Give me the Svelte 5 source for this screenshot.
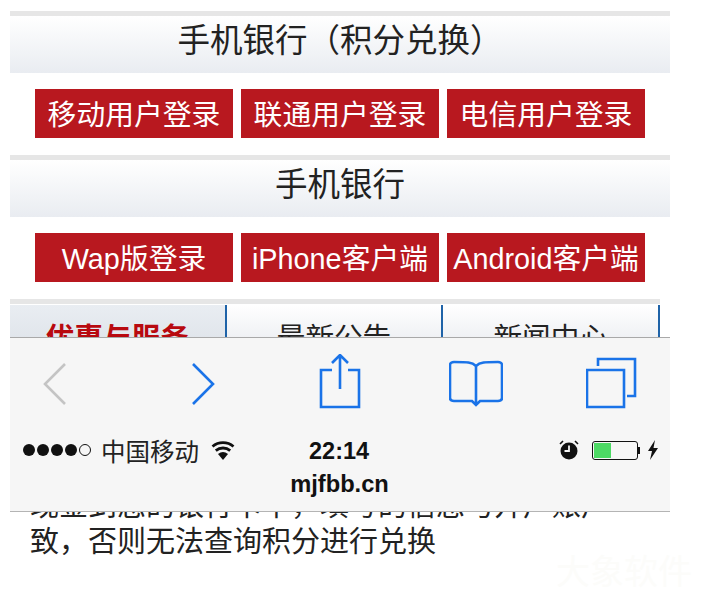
<script>
  const loginA = ['移动用户登录', '联通用户登录', '电信用户登录']
  const loginB = ['Wap版登录', 'iPhone客户端', 'Android客户端']
  const tabs = ['优惠与服务', '最新公告', '新闻中心']
</script>

<div class="page">
  <main>
    <h2 class="bar first">手机银行（积分兑换）</h2>
    <div class="buttons">
      {#each loginA as label}
        <a class="btn">{label}</a>
      {/each}
    </div>

    <h2 class="bar">手机银行</h2>
    <div class="buttons">
      {#each loginB as label}
        <a class="btn">{label}</a>
      {/each}
    </div>

    <div class="tabs">
      {#each tabs as tab, i}
        <div class="tab" class:active={i == 0}>{tab}</div>
      {/each}
    </div>

    <p class="note">现金到您的银行卡中，填写的信息与开户账户一致，否则无法查询积分进行兑换</p>
  </main>

  <div class="mark">大象软件</div>

  <!-- safari toolbar sits over the page -->
  <div class="safari">
    <div class="tools">
      <svg class="back" width="24" height="44" viewBox="0 0 24 44"><path d="M22 2 2 22l20 20" /></svg>
      <svg class="forward" width="24" height="44" viewBox="0 0 24 44"><path d="M2 2l20 20L2 42" /></svg>
      <svg class="share" width="42" height="56" viewBox="0 0 42 56">
        <path d="M13 16H2v37h38V16H29" />
        <path d="M21 2v33M13 9l8-8 8 8" />
      </svg>
      <svg class="book" width="54" height="48" viewBox="0 0 54 48">
        <path d="M27 6C23 2 18 2 5 2 3 2 1 3 1 5v33c0 2 2 3 4 3h18l4 4 4-4h18c2 0 4-1 4-3V5c0-2-2-3-4-3-13 0-18 0-22 4v37" />
      </svg>
      <svg class="pages" width="52" height="52" viewBox="0 0 52 52">
        <path d="M1 13h37v37H1z" />
        <path d="M12 9V2h37v37h-8" />
      </svg>
    </div>

    <div class="status">
      <span class="dots">
        {#each [1, 2, 3, 4] as d}<i></i>{/each}<i class="empty"></i>
      </span>
      <span class="carrier">中国移动</span>
      <svg class="wifi" width="24" height="19" viewBox="0 0 24 19">
        <path d="M12 19 7 13a8 8 0 0 1 10 0z" fill="#111" />
        <path d="M4.800 9.600a11.200 11.200 0 0 1 14.400 0M1.500 5.500a16.400 16.400 0 0 1 21 0" fill="none" stroke="#111" stroke-width="2.800" />
      </svg>
      <span class="time">22:14</span>
      <svg class="alarm" width="20" height="20" viewBox="0 0 20 20">
        <circle cx="10" cy="11" r="8.500" fill="#111" />
        <path d="M10 5.500V11H5.500" fill="none" stroke="#f6f6f6" stroke-width="1.800" />
        <path d="M1 4l3-3M19 4l-3-3" stroke="#111" stroke-width="1.600" />
      </svg>
      <span class="battery"><span class="level"></span></span>
      <span class="nub"></span>
      <svg class="bolt" width="10" height="20" viewBox="0 0 10 20">
        <path d="M7 0 0 11h4l-2 9 8-12H5.500z" fill="#111" />
      </svg>
    </div>

    <div class="url">mjfbb.cn</div>
  </div>
</div>

<style>
  :global(body) {
    background: #fff;
  }
  .page {
    position: relative;
    width: 709px;
    height: 600px;
    overflow: hidden;
    font-family: "Liberation Sans", "Noto Sans CJK SC", sans-serif;
    color: #222;
  }
  main {
    width: 660px;
    margin-left: 10px;
    padding-top: 11px;
  }
  .bar {
    height: 57px;
    margin: 0;
    border-top: 5px solid #e6e6e6;
    background: linear-gradient(#fff, #e9ecf1);
    font-size: 32.500px;
    font-weight: 400;
    line-height: 50px;
    text-align: center;
    color: #222;
  }
  .buttons {
    display: flex;
    justify-content: center;
    gap: 8px;
    padding: 16px 0 17px;
  }
  .btn {
    width: 198px;
    height: 49px;
    background: #b8181f;
    color: #fff;
    font-size: 28.800px;
    line-height: 52px;
    text-align: center;
    white-space: nowrap;
  }
  .tabs {
    display: flex;
    width: 650px;
    height: 90px;
    border-top: 5px solid #e6e6e6;
    box-sizing: border-box;
  }
  .tab {
    width: 216px;
    margin-top: 1px;
    border-right: 2px solid #1f63a8;
    background: linear-gradient(#fff, #eceef2 40px);
    font-size: 28.600px;
    line-height: 66px;
    text-align: center;
  }
  .tab.active {
    background: linear-gradient(#e9edf2, #dfe4ea 40px);
    color: #b8090f;
    font-weight: 700;
  }
  .note {
    margin: 99px 0 0 20px;
    width: 620px;
    font-size: 29px;
    line-height: 36px;
  }
  .mark {
    position: absolute;
    left: 556px;
    top: 545px;
    color: #fcfcfa;
    font-size: 34px;
    white-space: nowrap;
  }
  .safari {
    position: absolute;
    left: 10px;
    top: 337px;
    box-sizing: border-box;
    width: 660px;
    height: 175px;
    background: #f6f6f6;
    border-top: 1px solid #a9a9a9;
    border-bottom: 1px solid #b4b4b4;
  }
  .tools {
    display: flex;
    align-items: flex-start;
    height: 97px;
  }
  .tools svg {
    flex: none;
    fill: none;
    stroke: #1a73e8;
    stroke-width: 2.600;
  }
  .tools .back {
    margin: 24px 0 0 33px;
    stroke: #c4c4c4;
  }
  .tools .forward {
    margin: 24px 0 0 124px;
  }
  .tools .share {
    margin: 16px 0 0 104px;
  }
  .tools .book {
    margin: 22px 0 0 88px;
  }
  .tools .pages {
    margin: 19px 0 0 83px;
  }
  .status {
    display: flex;
    align-items: center;
    height: 30px;
    color: #111;
  }
  .dots {
    display: flex;
    gap: 2px;
    margin-left: 13px;
  }
  .dots i {
    width: 12px;
    height: 12px;
    border-radius: 50%;
    background: #111;
  }
  .dots i.empty {
    box-sizing: border-box;
    background: none;
    border: 1px solid #111;
  }
  .carrier {
    margin-left: 10px;
    font-size: 24.500px;
    color: #222;
  }
  .wifi {
    margin-left: 12px;
    flex: none;
  }
  .time {
    margin-left: 74px;
    font-size: 23.500px;
    font-weight: 700;
    position: relative;
    top: 1px;
  }
  .alarm {
    margin-left: 190px;
    flex: none;
  }
  .battery {
    box-sizing: border-box;
    width: 46px;
    height: 19px;
    margin-left: 13px;
    padding: 1px;
    border: 1px solid #111;
    border-radius: 3px;
  }
  .level {
    display: block;
    width: 17px;
    height: 100%;
    background: #4cd964;
  }
  .nub {
    width: 2px;
    height: 7px;
    margin-right: 8px;
    background: #111;
  }
  .bolt {
    flex: none;
  }
  .url {
    margin-top: 4px;
    font-size: 23.700px;
    font-weight: 700;
    line-height: 30px;
    text-align: center;
    color: #111;
    width: 659px;
  }
</style>
